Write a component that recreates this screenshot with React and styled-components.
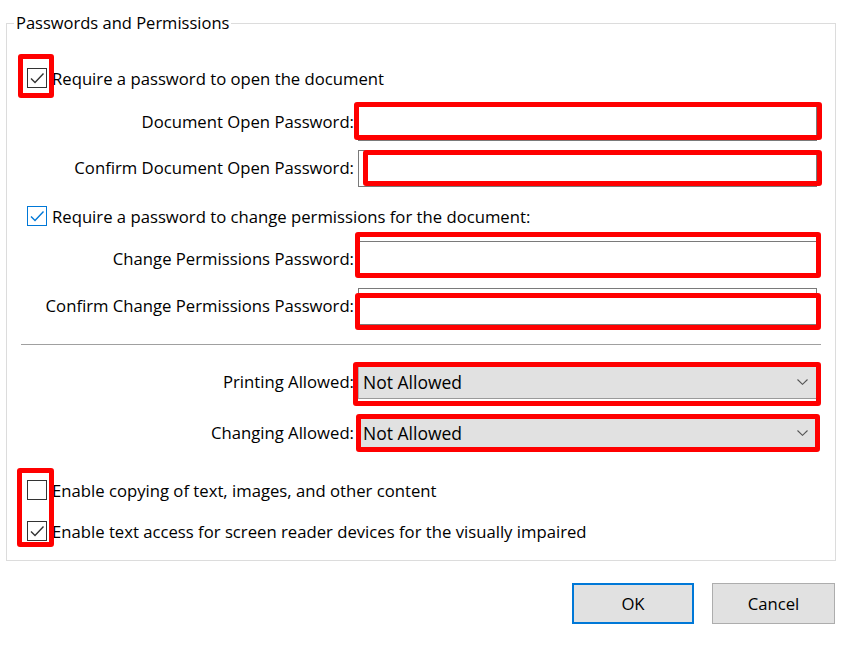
import React from 'react';
import styled, { createGlobalStyle } from 'styled-components';

const GlobalStyle = createGlobalStyle`
  html, body {
    margin: 0;
    padding: 0;
    background: #ffffff;
  }
  body {
    font-family: "Open Sans", "Noto Sans", "Liberation Sans", sans-serif;
    font-size: 16.7px;
    color: #000000;
  }
`;

const Dialog = styled.div`
  width: 848px;
  height: 646px;
  box-sizing: border-box;
  padding: 12px 0 0 6px;
  overflow: hidden;
`;

const GroupBox = styled.fieldset`
  width: 830px;
  box-sizing: border-box;
  margin: 0;
  padding: 0 0 19px 0;
  border: 1px solid #dcdcdc;
  display: flex;
  flex-direction: column;
`;

const Legend = styled.legend`
  margin-left: 7px;
  padding: 0 2px;
  line-height: 22px;
  font-size: 16.5px;
`;

const CheckRow = styled.label`
  display: flex;
  align-items: center;
  height: 20px;
  margin-top: ${p => p.$mt}px;
  padding-left: 20px;
  gap: 5px;
  white-space: nowrap;
`;

const Box = styled.span`
  position: relative;
  flex: none;
  width: 20px;
  height: 20px;
  box-sizing: border-box;
  border: 1px solid ${p => (p.$blue ? '#0078d7' : '#333333')};
  background: #ffffff;
  display: flex;
  align-items: center;
  justify-content: center;
`;

const Highlight = styled.span`
  position: absolute;
  box-sizing: border-box;
  border: 5px solid #ff0000;
  border-radius: 3px;
  pointer-events: none;
  top: ${p => p.$t}px;
  left: ${p => p.$l}px;
  ${p => (p.$w != null ? `width: ${p.$w}px;` : `right: ${p.$r}px;`)}
  ${p => (p.$h != null ? `height: ${p.$h}px;` : `bottom: ${p.$b}px;`)}
`;

const FieldRow = styled.div`
  display: grid;
  grid-template-columns: 347px 459px;
  column-gap: 4px;
  align-items: center;
  height: ${p => p.$h}px;
  margin-top: ${p => p.$mt}px;
`;

const Label = styled.span`
  text-align: right;
  white-space: nowrap;
  position: relative;
  top: -1px;
`;

const Field = styled.div`
  position: relative;
  height: 100%;
`;

const TextBox = styled.div`
  height: 100%;
  box-sizing: border-box;
  border: 1px solid #7a7a7a;
  background: #ffffff;
`;

const Combo = styled.div`
  height: 100%;
  box-sizing: border-box;
  border: 1px solid #adadad;
  border-bottom-color: #9a9a9a;
  background: #e1e1e1;
  display: flex;
  align-items: center;
  justify-content: space-between;
  padding: 0 8px 0 4px;
  font-size: 17.5px;
`;

const Separator = styled.div`
  height: 1px;
  background: #a0a0a0;
  margin: 19px 14px 0 14px;
`;

const CheckGroup = styled.div`
  position: relative;
  display: flex;
  flex-direction: column;
  margin-top: 30px;
`;

const ButtonBar = styled.div`
  display: flex;
  justify-content: flex-end;
  gap: 18px;
  margin-top: 22px;
  padding-right: 13px;
`;

const Button = styled.button`
  width: ${p => (p.$primary ? 122 : 123)}px;
  height: 41px;
  box-sizing: border-box;
  background: #e1e1e1;
  border: ${p => (p.$primary ? '2px solid #0078d7' : '1px solid #adadad')};
  font-family: inherit;
  font-size: 16.7px;
  color: #000000;
  padding: 0;
`;

const Check = ({ blue }) => (
  <svg width="18" height="18" viewBox="0 0 18 18">
    <path d="M3 9.5 L7 13.5 L15.5 4.5" fill="none" stroke={blue ? '#0078d7' : '#333333'} strokeWidth="1.4" />
  </svg>
);

const Chevron = () => (
  <svg width="11" height="6" viewBox="0 0 11 6">
    <path d="M0.5 0.5 L5.5 5.3 L10.5 0.5" fill="none" stroke="#555555" strokeWidth="1.1" />
  </svg>
);

const Checkbox = ({ checked, blue, children }) => (
  <Box $blue={blue}>
    {checked && <Check blue={blue} />}
    {children}
  </Box>
);

export default function App() {
  return (
    <>
      <GlobalStyle />
      <Dialog>
        <GroupBox>
          <Legend>Passwords and Permissions</Legend>

          <CheckRow $mt={34}>
            <Checkbox checked>
              <Highlight $t={-15} $l={-10} $w={36} $h={44} />
            </Checkbox>
            Require a password to open the document
          </CheckRow>

          <FieldRow $h={37} $mt={16}>
            <Label>Document Open Password:</Label>
            <Field>
              <TextBox />
              <Highlight $t={-2} $l={-4} $r={-5} $b={1} />
            </Field>
          </FieldRow>

          <FieldRow $h={37} $mt={9}>
            <Label>Confirm Document Open Password:</Label>
            <Field>
              <TextBox />
              <Highlight $t={0} $l={5} $r={-5} $b={1} />
            </Field>
          </FieldRow>

          <CheckRow $mt={19}>
            <Checkbox checked blue />
            Require a password to change permissions for the document:
          </CheckRow>

          <FieldRow $h={37} $mt={15}>
            <Label>Change Permissions Password:</Label>
            <Field>
              <TextBox />
              <Highlight $t={-9} $l={-3} $r={-4} $b={0} />
            </Field>
          </FieldRow>

          <FieldRow $h={37} $mt={10}>
            <Label>Confirm Change Permissions Password:</Label>
            <Field>
              <TextBox />
              <Highlight $t={5} $l={-3} $r={-4} $b={-5} />
            </Field>
          </FieldRow>

          <Separator />

          <FieldRow $h={34} $mt={20}>
            <Label>Printing Allowed:</Label>
            <Field>
              <Combo>
                Not Allowed
                <Chevron />
              </Combo>
              <Highlight $t={-3} $l={-5} $r={-4} $b={-7} />
            </Field>
          </FieldRow>

          <FieldRow $h={34} $mt={17}>
            <Label>Changing Allowed:</Label>
            <Field>
              <Combo>
                Not Allowed
                <Chevron />
              </Combo>
              <Highlight $t={-2} $l={-2} $r={-3} $b={-2} />
            </Field>
          </FieldRow>

          <CheckGroup>
            <CheckRow $mt={0}>
              <Checkbox />
              Enable copying of text, images, and other content
            </CheckRow>
            <CheckRow $mt={21}>
              <Checkbox checked />
              Enable text access for screen reader devices for the visually impaired
            </CheckRow>
            <Highlight $t={-12} $l={10} $w={37} $b={-6} />
          </CheckGroup>
        </GroupBox>

        <ButtonBar>
          <Button $primary>OK</Button>
          <Button>Cancel</Button>
        </ButtonBar>
      </Dialog>
    </>
  );
}
